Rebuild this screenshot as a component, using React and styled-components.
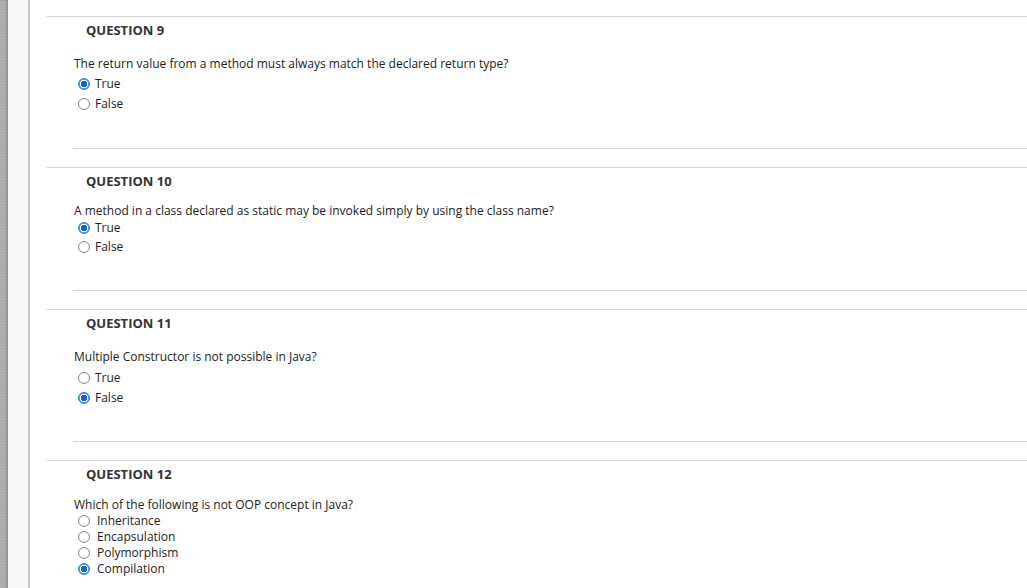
import React from 'react';
import styled, { createGlobalStyle } from 'styled-components';

const GlobalStyle = createGlobalStyle`
  html, body {
    margin: 0;
    padding: 0;
    background: #ffffff;
  }
  body {
    font-family: "Open Sans", "Noto Sans", sans-serif;
    color: #222222;
  }
`;

const Page = styled.div`
  display: flex;
  width: 1027px;
  height: 588px;
  overflow: hidden;
`;

const Strip = styled.div`
  width: 8px;
  flex-shrink: 0;
  background: repeating-linear-gradient(
    0deg,
    #a9a9a9 0px,
    #b8b8b8 1px,
    #a4a4a4 2px,
    #b3b3b3 3px
  );
  box-shadow: inset -2px 0 2px rgba(0, 0, 0, 0.15);
`;

const Gutter = styled.div`
  width: 20px;
  flex-shrink: 0;
  background: #f7f7f7;
  border-right: 2px solid #c8c8c8;
`;

const Main = styled.div`
  flex: 1;
  padding: 16px 0 0 17px;
`;

const Block = styled.section`
  border-top: 1px solid #d3d3d3;
  margin-bottom: 18px;
`;

const Header = styled.h3`
  margin: 0 0 0 39px;
  height: 27px;
  line-height: 27px;
  font-size: 13px;
  font-weight: 700;
  color: #333333;
`;

const Prompt = styled.p`
  margin: ${p => p.$top}px 0 0 27px;
  line-height: ${p => p.$lh}px;
  font-size: 12px;
`;

const Options = styled.div`
  display: flex;
  flex-direction: column;
  gap: ${p => p.$gap}px;
  margin: ${p => p.$top}px 0 0 31px;
`;

const Option = styled.label`
  display: flex;
  align-items: center;
  height: 16px;
  font-size: 12px;
  gap: ${p => p.$gap}px;
`;

const Radio = styled.span`
  box-sizing: border-box;
  width: 12px;
  height: 12px;
  border-radius: 50%;
  flex-shrink: 0;
  margin-top: 1px;
  border: 1px solid ${p => (p.$on ? '#2f80ed' : '#858585')};
  background: ${p =>
    p.$on
      ? 'radial-gradient(circle, #1366d6 0 3px, #ffffff 3.5px 4px, #5a9ff2 4.5px)'
      : '#ffffff'};
`;

const Divider = styled.hr`
  margin: ${p => p.$top}px 0 0 26px;
  border: 0;
  border-top: 1px solid #d3d3d3;
  height: 0;
`;

const questions = [
  {
    n: 9,
    text: 'The return value from a method must always match the declared return type?',
    opts: ['True', 'False'],
    picked: 0,
    textTop: 12,
    lh: 16,
    optTop: 3,
    rowGap: 4,
    gap: 5,
    lineTop: 37,
  },
  {
    n: 10,
    text: 'A method in a class declared as static may be invoked simply by using the class name?',
    opts: ['True', 'False'],
    picked: 0,
    textTop: 10,
    lh: 12,
    optTop: 2,
    rowGap: 3,
    gap: 5,
    lineTop: 36,
  },
  {
    n: 11,
    text: 'Multiple Constructor is not possible in Java?',
    opts: ['True', 'False'],
    picked: 1,
    textTop: 12,
    lh: 16,
    optTop: 4,
    rowGap: 4,
    gap: 5,
    lineTop: 36,
  },
  {
    n: 12,
    text: 'Which of the following is not OOP concept in Java?',
    opts: ['Inheritance', 'Encapsulation', 'Polymorphism', 'Compilation'],
    picked: 3,
    textTop: 10,
    lh: 14,
    optTop: 0,
    rowGap: 0,
    gap: 7,
    lineTop: 30,
  },
];

export default function App() {
  return (
    <Page>
      <GlobalStyle />
      <Strip />
      <Gutter />
      <Main>
        {questions.map(q => (
          <Block key={q.n}>
            <Header>QUESTION {q.n}</Header>
            <Prompt $top={q.textTop} $lh={q.lh}>{q.text}</Prompt>
            <Options $top={q.optTop} $gap={q.rowGap}>
              {q.opts.map((o, i) => (
                <Option key={o} $gap={q.gap}>
                  <Radio $on={i === q.picked} />
                  {o}
                </Option>
              ))}
            </Options>
            <Divider $top={q.lineTop} />
          </Block>
        ))}
      </Main>
    </Page>
  );
}
